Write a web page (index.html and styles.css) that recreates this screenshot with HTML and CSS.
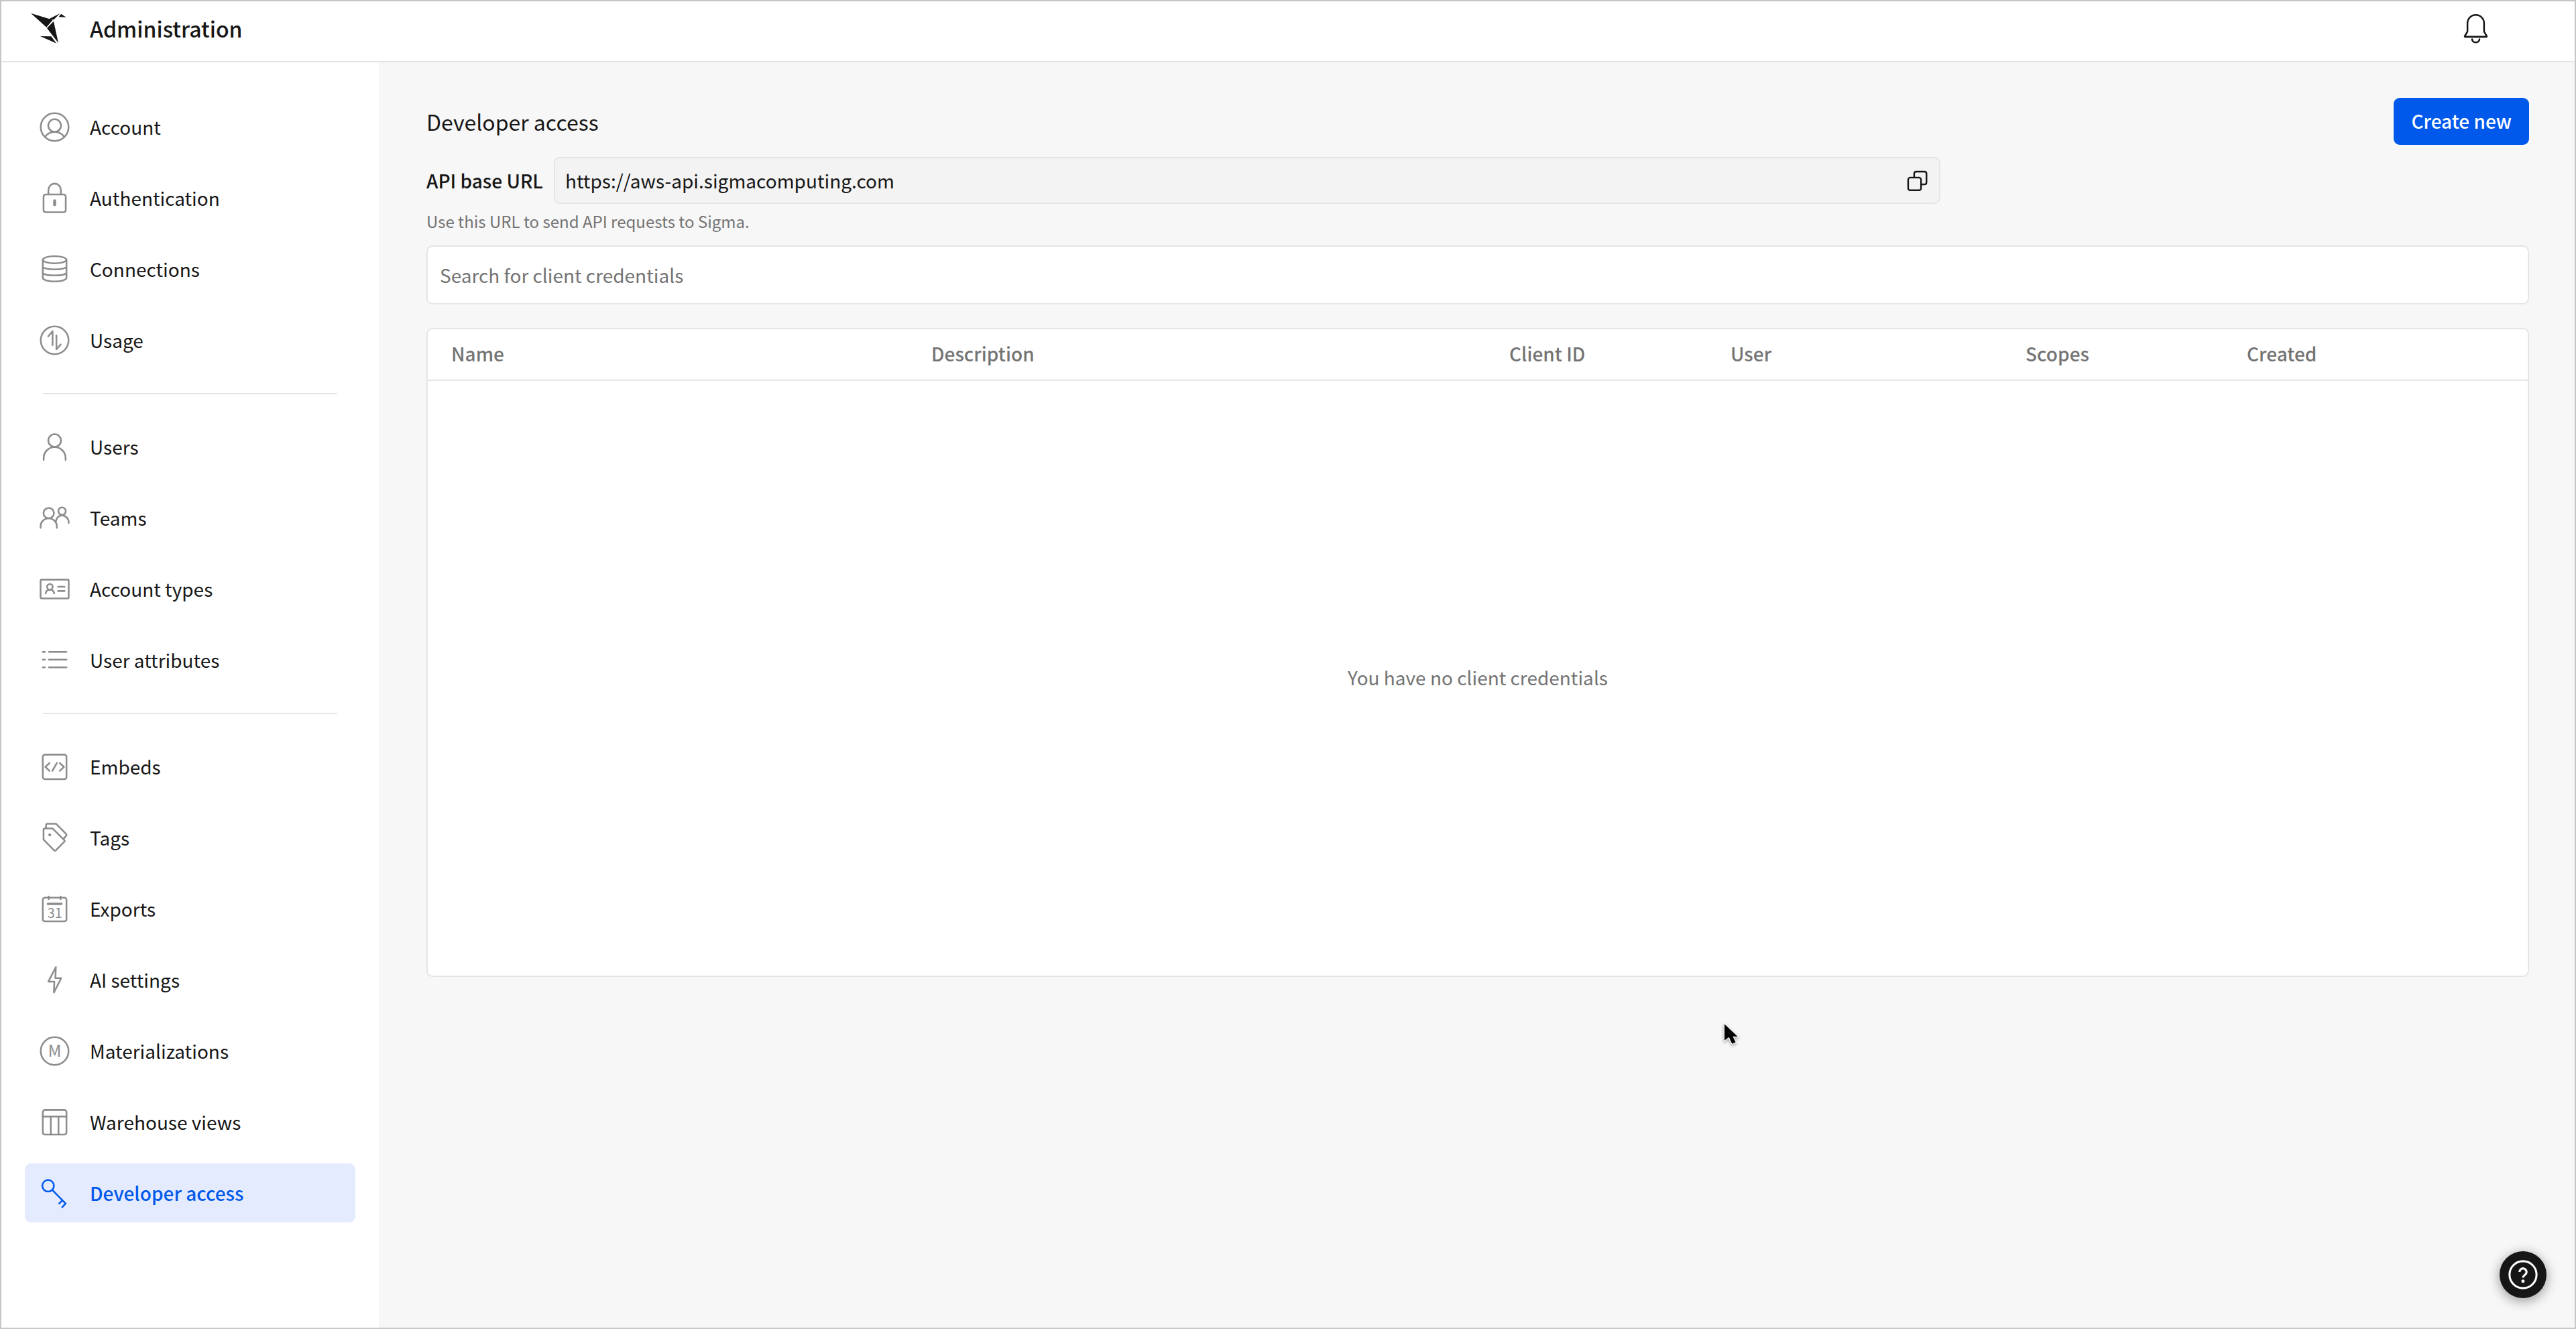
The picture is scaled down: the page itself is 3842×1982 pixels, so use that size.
FILE: index.html
```html
<!DOCTYPE html>
<html lang="en">
<head>
<meta charset="UTF-8">
<meta name="viewport" content="width=device-width, initial-scale=1">
<title>Administration - Developer access</title>
<link rel="stylesheet" href="styles.css">
</head>
<body>

  <!-- Top bar -->
  <header class="topbar">
    <svg class="logo" viewBox="0 0 192 168" aria-hidden="true">
      <path d="M18 17 116 47 88 80zM97 44 148 18 121 46zM143 34 153 20 176 35zM120 53 141 150 90 84zM60 120 109 121 133 152z"/>
    </svg>
    <span class="topbar-title">Administration</span>
    <button class="bell" type="button" aria-label="Notifications">
      <svg class="icon" viewBox="0 0 24 24">
        <path d="M12 2.8c-3.1 0-5.6 2.5-5.6 5.6v5.2c0 .5-.1.8-.4 1.2l-1.4 2.3c-.1.3 0 .5.3.5h14.2c.3 0 .4-.2.3-.5L18 14.8c-.3-.4-.4-.7-.4-1.2V8.4c0-3.1-2.5-5.6-5.6-5.6z"/>
        <path d="M9.5 19.3c.2 1.3 1.2 2.1 2.5 2.1s2.3-.8 2.5-2.1"/>
      </svg>
    </button>
  </header>

  <div class="layout">

    <!-- Sidebar -->
    <nav class="sidebar">
      <ul class="nav-group">
        <li><a class="nav-item" href="#account">
          <svg class="icon" viewBox="0 0 24 24"><circle cx="12" cy="12" r="9.4"/><circle cx="12" cy="11" r="4.3"/><path d="M5.6 18.6c1.3-2 3.7-3.3 6.4-3.3s5.1 1.3 6.4 3.3"/></svg>
          Account</a></li>
        <li><a class="nav-item" href="#authentication">
          <svg class="icon" viewBox="0 0 24 24"><rect x="4.5" y="9.5" width="15" height="12" rx="1.4"/><path d="M7.8 9.5V6.4a4.2 4.2 0 0 1 8.4 0v3.1"/><path class="thick" d="M12 13.8v2.6"/></svg>
          Authentication</a></li>
        <li><a class="nav-item" href="#connections">
          <svg class="icon" viewBox="0 0 24 24"><ellipse cx="12" cy="5.6" rx="8" ry="2.4"/><path d="M4 5.6v12.2c0 1.4 3.6 2.5 8 2.5s8-1.1 8-2.5V5.6M4 10.6c1 .9 4.2 1.5 8 1.5s7-.6 8-1.5M4 14.7c1 .9 4.2 1.5 8 1.5s7-.6 8-1.5"/></svg>
          Connections</a></li>
        <li><a class="nav-item" href="#usage">
          <svg class="icon" viewBox="0 0 24 24"><circle cx="12" cy="12" r="9.4"/><path d="M7.7 9.3l2.9-3.4v9.4M13.2 8.7v9.4l2.9-3.3"/></svg>
          Usage</a></li>
      </ul>
      <hr class="divider">
      <ul class="nav-group">
        <li><a class="nav-item" href="#users">
          <svg class="icon" viewBox="0 0 24 24"><circle cx="12" cy="7.7" r="4.3"/><path d="M4.6 20.8v-1.3a7.4 7.4 0 0 1 14.8 0v1.3"/></svg>
          Users</a></li>
        <li><a class="nav-item" href="#teams">
          <svg class="icon" viewBox="0 0 24 24"><circle cx="8" cy="8.7" r="3.5"/><path d="M2.5 18.7v-1a5.5 5.5 0 0 1 11 0v1"/><circle cx="17" cy="7.4" r="2.5"/><path d="M12.9 14c.5-2.3 2.1-3.7 4.1-3.7 2.6 0 4.5 2.1 4.5 4.6v.5"/></svg>
          Teams</a></li>
        <li><a class="nav-item" href="#account-types">
          <svg class="icon" viewBox="0 0 24 24"><rect x="2.5" y="5.6" width="19" height="12.7" rx=".8"/><circle cx="8.8" cy="10.5" r="1.9"/><path d="M5.9 14.9c.3-1.4 1.4-2.4 2.9-2.4s2.6 1 2.9 2.4M14.3 10.4h4.4M14.3 13.3h4.4"/></svg>
          Account types</a></li>
        <li><a class="nav-item" href="#user-attributes">
          <svg class="icon" viewBox="0 0 24 24"><path d="M4 6.5h1.4M8.2 6.5h11.8M4 11.7h1.4M8.2 11.7h11.8M4 16.9h1.4M8.2 16.9h11.8"/></svg>
          User attributes</a></li>
      </ul>
      <hr class="divider">
      <ul class="nav-group">
        <li><a class="nav-item" href="#embeds">
          <svg class="icon" viewBox="0 0 24 24"><rect x="4" y="3.8" width="16" height="16.6" rx="1.4"/><path d="M8.5 9.5l-2.8 2.6 2.8 2.7M13.5 9.4l-3 5.4M15.5 9.5l2.8 2.6-2.8 2.7"/></svg>
          Embeds</a></li>
        <li><a class="nav-item" href="#tags">
          <svg class="icon" viewBox="0 0 24 24"><path d="M5.5 5.7h5.1L18.5 13.5q.6.6 0 1.2l-5.7 5.7q-.6.5-1.2 0L4.5 13.2V6.7q0-1 1-1z"/><path d="M6.2 5.5V3.5q0-1 1-1H13l6.6 6.7q.8.8 0 1.6l-1.5 1.7"/><circle class="dot" cx="8.7" cy="10" r="1"/></svg>
          Tags</a></li>
        <li><a class="nav-item" href="#exports">
          <svg class="icon" viewBox="0 0 24 24"><rect x="4" y="4.4" width="16" height="16" rx="1.4"/><path d="M8 3.6v1.8M16 3.6v1.8"/><path class="bar" d="M7.4 8.6h9.2"/><text class="icon-text" x="7.1 12.1" y="18.2" font-size="9">31</text></svg>
          Exports</a></li>
        <li><a class="nav-item" href="#ai-settings">
          <svg class="icon" viewBox="0 0 24 24"><path d="M12.8 3.3 7.8 13.1h4L11.5 20.5 16.4 10.8h-3.9z"/></svg>
          AI settings</a></li>
        <li><a class="nav-item" href="#materializations">
          <svg class="icon" viewBox="0 0 24 24"><circle cx="12" cy="12" r="9.4"/><text class="icon-text" x="12" y="15.9" font-size="11" text-anchor="middle">M</text></svg>
          Materializations</a></li>
        <li><a class="nav-item" href="#warehouse-views">
          <svg class="icon" viewBox="0 0 24 24"><rect x="4" y="3.8" width="16" height="16.6" rx="1.4"/><path d="M4 8.2h16M9.4 8.2v12.2M14.6 8.2v12.2"/></svg>
          Warehouse views</a></li>
        <li><a class="nav-item active" href="#developer-access" aria-current="page">
          <svg class="icon" viewBox="0 0 24 24"><circle cx="7.6" cy="7" r="3.9"/><path d="M10.4 9.8l9 9.2-2.3 2.4M17.2 16.8l-2.1 2.2"/></svg>
          Developer access</a></li>
      </ul>
    </nav>

    <!-- Content -->
    <main class="content">
      <div class="page-head">
        <h1>Developer access</h1>
        <button class="btn-primary" type="button">Create new</button>
      </div>

      <div class="api-row">
        <label for="apiUrl">API base URL</label>
        <div class="api-field">
          <input id="apiUrl" type="text" value="https://aws-api.sigmacomputing.com" readonly>
          <button class="copy" type="button" aria-label="Copy URL">
            <svg viewBox="0 0 16 16"><rect x="1.8" y="5.9" width="8.8" height="8.6" rx="1.4"/><path d="M5.9 5.9V3.2q0-1.4 1.4-1.4h5.6q1.4 0 1.4 1.4v5.9q0 1.4-1.4 1.4h-2.3"/></svg>
          </button>
        </div>
      </div>
      <p class="hint">Use this URL to send API requests to Sigma.</p>

      <input class="search" type="search" placeholder="Search for client credentials" aria-label="Search for client credentials">

      <table class="credentials">
        <thead>
          <tr>
            <th class="col-name">Name</th>
            <th class="col-description">Description</th>
            <th class="col-short">Client ID</th>
            <th class="col-user">User</th>
            <th class="col-short">Scopes</th>
            <th>Created</th>
          </tr>
        </thead>
        <tbody>
          <tr>
            <td class="empty" colspan="6">You have no client credentials</td>
          </tr>
        </tbody>
      </table>
    </main>
  </div>

  <button class="help" type="button" aria-label="Help">
    <svg viewBox="0 0 24 24"><circle cx="12" cy="12" r="10.5"/><path d="M9.3 9.9a2.7 2.7 0 1 1 4.2 2.2c-1 .7-1.5 1.1-1.5 2.3"/><circle class="help-dot" cx="12" cy="17.1" r=".5"/></svg>
  </button>

  <!-- Mouse pointer -->
  <svg class="cursor" viewBox="0 0 90 120" aria-hidden="true">
    <path d="M18 16V89L38 74 52 104 68 97 55 71H77z"/>
  </svg>

</body>
</html>
```
FILE: styles.css
```css
* {
  margin: 0;
  padding: 0;
  box-sizing: border-box;
}

body {
  min-height: 100vh;
  display: flex;
  flex-direction: column;
  border: 2px solid #c6c6c6;
  background: #fff;
  color: #161616;
  font-family: "Noto Sans CJK SC", "Noto Sans", sans-serif;
  font-size: 28px;
  line-height: 40px;
}

button, input {
  font: inherit;
  color: inherit;
}

button {
  border: none;
  background: none;
  cursor: pointer;
}

.icon {
  width: 53px;
  height: 53px;
  flex: none;
  fill: none;
  stroke: currentColor;
  stroke-width: 1.15;
  stroke-linecap: round;
  stroke-linejoin: round;
}

/* Top bar */
.topbar {
  display: flex;
  align-items: center;
  height: 91px;
  padding: 0 121px 9px 38px;
  border-bottom: 2px solid #e5e5e5;
}

.logo {
  width: 64px;
  height: 56px;
  margin-right: 30px;
  fill: #161616;
}

.topbar-title {
  flex: 1;
  font-size: 32px;
  font-weight: 500;
}

.bell {
  display: flex;
}

.layout {
  flex: 1;
  display: flex;
}

/* Sidebar */
.sidebar {
  width: 563px;
  flex: none;
  padding: 52px 35px;
}

.nav-group {
  display: flex;
  flex-direction: column;
  gap: 18px;
  list-style: none;
}

.nav-item {
  display: flex;
  align-items: center;
  gap: 26px;
  height: 88px;
  padding: 0 18px;
  border-radius: 9px;
  color: inherit;
  text-decoration: none;
}

.nav-item .icon {
  color: #8c8c8c;
}

.nav-item.active {
  background: #e5ebfe;
  color: #0059eb;
  font-weight: 500;
}

.nav-item.active .icon {
  color: inherit;
}

.divider {
  height: 2px;
  margin: 35px 27px 34px;
  border: none;
  background: #e5e5e5;
}

.thick {
  stroke-width: 2;
}

.bar {
  stroke-width: 1.5;
}

.dot,
.icon-text {
  fill: currentColor;
  stroke: none;
}

/* Content */
.content {
  flex: 1;
  min-width: 0;
  padding: 53px 68px 53px 71px;
  background: #f7f7f7;
}

.page-head {
  display: flex;
  align-items: center;
  justify-content: space-between;
  margin-bottom: 18px;
}

h1 {
  font-size: 32px;
  font-weight: 400;
}

.btn-primary {
  height: 70px;
  padding: 0 26px 2px;
  border-radius: 9px;
  background: #0059eb;
  color: #fff;
  font-weight: 500;
}

.api-row {
  display: flex;
  align-items: center;
  gap: 16px;
  width: 72%;
}

.api-row label {
  font-weight: 500;
}

.api-field {
  flex: 1;
  display: flex;
  align-items: center;
  height: 70px;
  padding: 0 15px;
  border: 2px solid #e5e5e5;
  border-radius: 9px;
  background: #f3f3f3;
}

.api-field input {
  flex: 1;
  border: none;
  outline: none;
  background: none;
}

.copy {
  display: flex;
}

.copy svg {
  width: 35px;
  height: 35px;
  fill: none;
  stroke: #161616;
  stroke-width: 1.1;
}

.hint {
  margin: 9px 0 19px;
  color: #737373;
  font-size: 24px;
  line-height: 34px;
}

.search {
  display: block;
  width: 100%;
  height: 88px;
  margin-bottom: 35px;
  padding: 0 18px;
  border: 2px solid #e5e5e5;
  border-radius: 9px;
  background: #fff;
  appearance: none;
}

.search::placeholder {
  color: #737373;
  opacity: 1;
}

/* Table */
.credentials {
  width: 100%;
  table-layout: fixed;
  border: 2px solid #e5e5e5;
  border-radius: 9px;
  border-spacing: 0;
  background: #fff;
  color: #737373;
}

.credentials th {
  height: 77px;
  padding: 0 0 3px 35px;
  border-bottom: 2px solid #e5e5e5;
  font-weight: 500;
  text-align: left;
}

.col-name {
  width: 716px;
}

.col-description {
  width: 862px;
}

.col-short {
  width: 330px;
}

.col-user {
  width: 440px;
}

.empty {
  height: 887px;
  padding-bottom: 4px;
  text-align: center;
}

/* Help button */
.help {
  position: fixed;
  right: 44px;
  bottom: 46px;
  display: flex;
  align-items: center;
  justify-content: center;
  width: 70px;
  height: 70px;
  border-radius: 50%;
  background: #161616;
  box-shadow: 0 4px 18px rgba(0, 0, 0, 0.4);
}

.help svg {
  width: 46px;
  height: 46px;
  fill: none;
  stroke: #fff;
  stroke-width: 1.6;
}

.help .help-dot {
  fill: #fff;
}

.cursor {
  position: absolute;
  left: 2566px;
  top: 1522px;
  width: 30px;
  height: 40px;
  fill: #000;
  stroke: #fff;
  stroke-width: 7;
  paint-order: stroke;
  filter: drop-shadow(0 2px 2px rgba(0, 0, 0, 0.35));
  overflow: visible;
  pointer-events: none;
}
```
